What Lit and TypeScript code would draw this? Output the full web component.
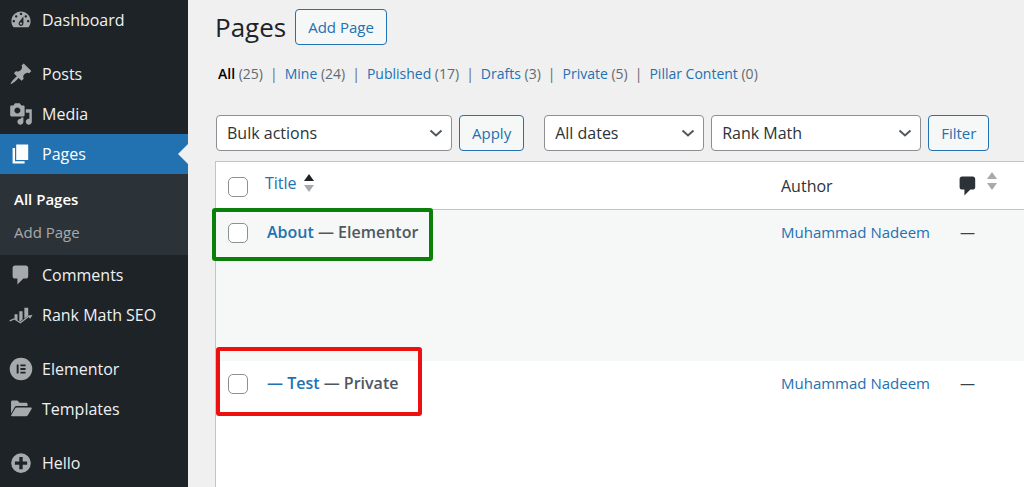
import { LitElement, html, css, svg } from "lit";
import { customElement, property } from "lit/decorators.js";

const icons: Record<string, unknown> = {
  dashboard: svg`<path fill-rule="evenodd" d="M3.76 16h12.48c1.1-1.37 1.76-3.11 1.76-5 0-4.42-3.58-8-8-8s-8 3.58-8 8c0 1.89.66 3.63 1.76 5zM10 4c.55 0 1 .45 1 1s-.45 1-1 1-1-.45-1-1 .45-1 1-1zM6 6c.55 0 1 .45 1 1s-.45 1-1 1-1-.45-1-1 .45-1 1-1zm8 0c.55 0 1 .45 1 1s-.45 1-1 1-1-.45-1-1 .45-1 1-1zm-5.37 5.55L12 7v6c0 1.1-.9 2-2 2s-2-.9-2-2c0-.57.24-1.08.63-1.45zM4 10c.55 0 1 .45 1 1s-.45 1-1 1-1-.45-1-1 .45-1 1-1zm12 0c.55 0 1 .45 1 1s-.45 1-1 1-1-.45-1-1 .45-1 1-1zm-5 3c0-.55-.45-1-1-1s-1 .45-1 1 .45 1 1 1 1-.45 1-1z"/>`,
  post: svg`<path d="M10.44 3.02l1.82-1.82 6.36 6.35-1.83 1.82c-1.05-.68-2.48-.57-3.41.36l-.75.75c-.92.93-1.04 2.35-.35 3.41l-1.83 1.82-2.41-2.41-2.8 2.79c-.42.42-3.38 2.71-3.8 2.29s1.86-3.39 2.28-3.81l2.79-2.79L4.1 9.36l1.83-1.82c1.05.69 2.48.57 3.4-.36l.75-.75c.93-.92 1.05-2.35.36-3.41z"/>`,
  media: svg`<path fill-rule="evenodd" d="M13 11V4c0-.55-.45-1-1-1h-1.67L9 1H5L3.67 3H2c-.55 0-1 .45-1 1v7c0 .55.45 1 1 1h10c.55 0 1-.45 1-1zM7 4.5c1.38 0 2.5 1.12 2.5 2.5S8.38 9.5 7 9.5 4.5 8.38 4.5 7 5.62 4.5 7 4.5zM14 6h5v10.5c0 1.38-1.12 2.5-2.5 2.5S14 17.88 14 16.5s1.12-2.5 2.5-2.5c.17 0 .34.02.5.05V9h-3V6zm-4 8.05V13h2v3.5c0 1.38-1.12 2.5-2.5 2.5S7 17.88 7 16.5 8.12 14 9.5 14c.17 0 .34.02.5.05z"/>`,
  page: svg`<path d="M6 15V2h10v13H6zm-1 1h8v2H3V5h2v11z"/>`,
  comment: svg`<path d="M5 2h9c1.1 0 2 .9 2 2v7c0 1.1-.9 2-2 2h-2l-5 5v-5H5c-1.1 0-2-.9-2-2V4c0-1.1.9-2 2-2z"/>`,
  chart: svg`<path d="M4.6 9.3h2.5v5.4l-2.5-1.5zM8.6 6.8h2.7v7l-2.1 1.8-.6-.3zM12.8 4h3.2v6.6l-3.2 2.3z"/><path d="M.6 14.9l3.6-1.7 5.3 3.2 7-5.4" fill="none" stroke="currentColor" stroke-width="1"/><path d="M15.4 10.6l4.2-.8-2 3.4z"/>`,
  elementor: svg`<path fill-rule="evenodd" d="M10 .6a9.4 9.4 0 1 0 0 18.800a9.4 9.4 0 0 0 0-18.800zM6.400 6.200H8v7.600H6.400zM9.500 6.200h4.300v1.500H9.500zM9.500 9.250h4.300v1.500H9.500zM9.500 12.300h4.300v1.500H9.500z"/>`,
  folder: svg`<path d="M1.700 4.200c0-.8.500-1.300 1.300-1.300h4l1.900 1.900h5.300c.8 0 1.300.5 1.300 1.300v1.500H6.300c-.7 0-1.200.3-1.600.9l-3 5.200z"/><path d="M6.500 8.800h11.700c.7 0 1 .5.600 1.100l-3 5.200c-.3.500-.8.900-1.500.9H2.400c-.6 0-.9-.4-.5-1l3.200-5.400c.3-.5.800-.8 1.400-.8z"/>`,
  plus: svg`<path fill-rule="evenodd" d="M10 1.900a8.200 8.200 0 1 0 0 16.400a8.200 8.200 0 0 0 0-16.400zM8.600 5h2.800v3.700h3.700v2.800h-3.700v3.700H8.600v-3.700H4.900V8.700h3.700z"/>`,
};

const icon = (name: string) =>
  html`<svg class="icon" viewBox="0 0 20 20" aria-hidden="true">${icons[name]}</svg>`;

@customElement("admin-menu")
class AdminMenu extends LitElement {
  static styles = css`
    :host { display: block; background: #1d2327; font-size: 16px; line-height: 40px; }
    ul { list-style: none; margin: 0; padding: 0; }
    a { color: #f0f0f1; text-decoration: none; }
    .item { display: flex; align-items: center; gap: 9px; padding-left: 9px; height: 40px; position: relative; }
    .icon { width: 24px; height: 24px; flex: none; fill: currentColor; color: #a7aaad; }
    .spaced { margin-top: 14px; }
    .current { background: #2271b1; color: #fff; }
    .current .icon { color: #fff; }
    .current::after {
      content: ""; position: absolute; right: 0; top: 10px;
      border: 10px solid transparent; border-left-width: 0; border-right-color: #f0f0f1;
    }
    .submenu { background: #2c3338; padding: 9px 0 6px; font-size: 15px; line-height: 33px; }
    .submenu a { display: block; padding-left: 14px; color: #a7aaad; }
    .submenu .active { color: #fff; font-weight: 600; }
  `;

  private items = [
    { label: "Dashboard", icon: "dashboard" },
    { label: "Posts", icon: "post", spaced: true },
    { label: "Media", icon: "media" },
    { label: "Pages", icon: "page", current: true },
    { label: "Comments", icon: "comment" },
    { label: "Rank Math SEO", icon: "chart" },
    { label: "Elementor", icon: "elementor", spaced: true },
    { label: "Templates", icon: "folder" },
    { label: "Hello", icon: "plus", spaced: true },
  ];

  render() {
    return html`<nav aria-label="Main menu"><ul>
      ${this.items.map((i) => html`
        <li class=${i.spaced ? "spaced" : ""}>
          <a href="#" class=${i.current ? "item current" : "item"}>${icon(i.icon)}<span>${i.label}</span></a>
          ${i.current ? html`<ul class="submenu">
            <li><a href="#" class="active">All Pages</a></li>
            <li><a href="#">Add Page</a></li>
          </ul>` : ""}
        </li>`)}
    </ul></nav>`;
  }
}

@customElement("select-box")
class SelectBox extends LitElement {
  static styles = css`
    :host { display: grid; }
    select {
      grid-area: 1 / 1; appearance: none; width: 100%; height: 36px; margin: 0; padding: 0 30px 0 10px;
      border: 1px solid #8c8f94; border-radius: 4px; background: #fff;
      color: #2c3338; font: inherit; font-size: 16px;
    }
    svg {
      grid-area: 1 / 1; justify-self: end; align-self: center; width: 14px; height: 14px; margin-right: 9px;
      fill: none; stroke: #50575e; stroke-width: 2; pointer-events: none;
    }
  `;
  @property() label = "";
  @property() value = "";
  render() {
    return html`<select aria-label=${this.label}><option>${this.value}</option></select>
      <svg viewBox="0 0 14 14" aria-hidden="true"><path d="M1.500 4.500l5.500 5 5.500-5"/></svg>`;
  }
}

@customElement("app-root")
class AppRoot extends LitElement {
  static styles = css`
    :host {
      display: grid; grid-template-columns: 188px minmax(0, 1fr); height: 100vh;
      overflow: hidden; background: #f0f0f1; color: #3c434a;
      font-family: "Segoe UI", "Open Sans", "Noto Sans", sans-serif; font-size: 14px;
    }
    main { padding: 9px 0 0 27px; }
    a { color: #2271b1; text-decoration: none; }
    .head { display: flex; align-items: center; gap: 9px; }
    h1 { margin: 0; font-size: 26px; font-weight: 400; line-height: 36px; color: #1d2327; }
    .button {
      box-sizing: border-box; height: 36px; padding: 0 12px; border: 1px solid #2271b1; border-radius: 4px;
      background: #f6f7f7; color: #2271b1; font: inherit; font-size: 15px; line-height: 34px;
    }
    .views { display: flex; list-style: none; margin: 18px 0 0; padding: 0 0 0 3px; line-height: 22px; white-space: nowrap; color: #646970; }
    .views li + li::before { content: "|"; padding: 0 7px; }
    .views .here { color: #000; font-weight: 600; }
    .tools { display: flex; gap: 7px; margin-top: 30px; padding-left: 1px; }
    .bulk { width: 236px; }
    .dates { width: 160px; margin-left: 13px; }
    .seo { width: 210px; }
    .list { position: relative; margin-top: 10px; }
    table { width: 100%; table-layout: fixed; border-collapse: separate; border-spacing: 0; background: #fff; border: solid #c3c4c7; border-width: 1px 0 0 1px; }
    th, td { padding: 0; text-align: left; font-weight: 400; vertical-align: top; }
    th { height: 47px; border-bottom: 1px solid #c3c4c7; font-size: 16px; color: #2c3338; vertical-align: middle; }
    td { height: 141px; padding-top: 10px; line-height: 24px; font-size: 15px; }
    .check { width: 49px; }
    .author { width: 179px; }
    .talk { width: 64px; }
    .striped { background: #f6f7f7; }
    .check input {
      appearance: none; display: block; box-sizing: border-box; width: 20px; height: 20px; margin: 3px 0 0 12px;
      border: 1px solid #8c8f94; border-radius: 5px; background: #fff;
    }
    .name { padding-left: 2px; font-size: 16px; font-weight: 600; color: #50575e; }
    .sort { display: inline-flex; align-items: center; gap: 7px; padding-bottom: 5px; }
    .arrows { width: 10px; height: 18px; fill: #a7aaad; }
    .asc .up { fill: #1d2327; }
    .icon { width: 24px; height: 24px; margin: 5px -4px -5px; fill: #2c3338; }
    .talk .sort { gap: 11px; padding-bottom: 0; }
    .mark { position: absolute; box-sizing: border-box; border: 4px solid; border-radius: 3px; pointer-events: none; }
    .green { left: -3px; top: 47px; width: 221px; height: 53px; border-color: #0a800a; }
    .red { left: 1px; top: 186px; width: 206px; height: 69px; border-color: #ec1010; }
  `;

  private views = [
    ["Mine", 24], ["Published", 17], ["Drafts", 3], ["Private", 5], ["Pillar Content", 0],
  ];

  private arrows = html`<svg class="arrows" viewBox="0 0 10 18" aria-hidden="true">
    <path class="up" d="M5 0l5 7H0z"/><path d="M0 11h10l-5 7z"/></svg>`;

  render() {
    return html`
      <admin-menu></admin-menu>
      <main>
        <div class="head"><h1>Pages</h1><a class="button" href="#">Add Page</a></div>
        <ul class="views">
          <li><a class="here" href="#">All</a> (25)</li>
          ${this.views.map(([n, c]) => html`<li><a href="#">${n}</a> (${c})</li>`)}
        </ul>
        <div class="tools">
          <select-box class="bulk" label="Select bulk action" value="Bulk actions"></select-box>
          <button class="button">Apply</button>
          <select-box class="dates" label="Filter by date" value="All dates"></select-box>
          <select-box class="seo" label="Filter by SEO" value="Rank Math"></select-box>
          <button class="button">Filter</button>
        </div>
        <div class="list">
          <table>
            <thead><tr>
              <th class="check"><input type="checkbox" aria-label="Select all"></th>
              <th><a class="sort asc" href="#">Title ${this.arrows}</a></th>
              <th class="author">Author</th>
              <th class="talk"><a class="sort" href="#" aria-label="Comments">${icon("comment")}${this.arrows}</a></th>
            </tr></thead>
            <tbody>
              <tr class="striped">
                <td class="check"><input type="checkbox" aria-label="Select About"></td>
                <td class="name"><a href="#">About</a> — Elementor</td>
                <td><a href="#">Muhammad Nadeem</a></td>
                <td>—</td>
              </tr>
              <tr>
                <td class="check"><input type="checkbox" aria-label="Select Test"></td>
                <td class="name"><a href="#">— Test</a> — Private</td>
                <td><a href="#">Muhammad Nadeem</a></td>
                <td>—</td>
              </tr>
            </tbody>
          </table>
          <div class="mark green"></div>
          <div class="mark red"></div>
        </div>
      </main>`;
  }
}
